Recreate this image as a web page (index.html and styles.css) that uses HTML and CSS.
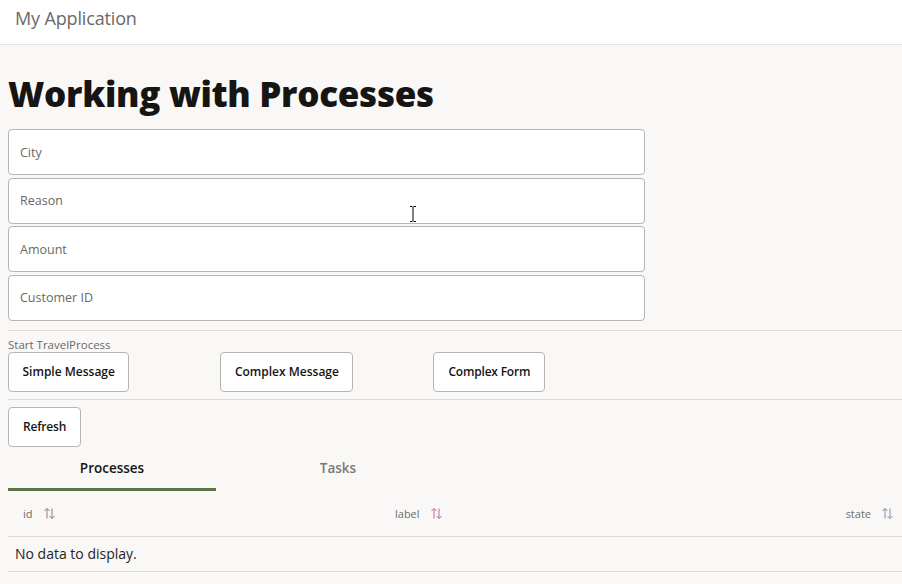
FILE: index.html
```html
<!DOCTYPE html>
<html>
<head>
<meta charset="utf-8">
<link rel="stylesheet" href="styles.css">
</head>
<body>
<header class="topbar"><span class="app-title">My Application</span></header>
<main class="content">
  <h1 class="page-title">Working with Processes</h1>
  <div class="fields">
    <div class="field"><span class="ph">City</span></div>
    <div class="field"><span class="ph">Reason</span></div>
    <div class="field"><span class="ph">Amount</span></div>
    <div class="field"><span class="ph">Customer ID</span></div>
  </div>
  <hr class="sep sep-first">
  <div class="group-label">Start TravelProcess</div>
  <div class="btn-row">
    <button class="btn btn-simple">Simple Message</button>
    <button class="btn btn-complex">Complex Message</button>
    <button class="btn btn-form">Complex Form</button>
  </div>
  <hr class="sep sep-second">
  <div class="btn-row refresh-row">
    <button class="btn btn-refresh">Refresh</button>
  </div>
  <div class="tabs">
    <div class="tab tab-active">Processes</div>
    <div class="tab tab-second">Tasks</div>
  </div>
  <div class="table">
    <div class="thead">
      <div class="th th-id">id <svg class="sort" viewBox="0 0 11 12"><path d="M3 11V1M0.5 3.5L3 1l2.5 2.5M8 1v10M5.5 8.5L8 11l2.5-2.5" fill="none" stroke="currentColor" stroke-width="1"/></svg></div>
      <div class="th th-label">label <svg class="sort" viewBox="0 0 11 12"><path d="M3 11V1M0.5 3.5L3 1l2.5 2.5M8 1v10M5.5 8.5L8 11l2.5-2.5" fill="none" stroke="currentColor" stroke-width="1"/></svg></div>
      <div class="th th-state">state <svg class="sort" viewBox="0 0 11 12"><path d="M3 11V1M0.5 3.5L3 1l2.5 2.5M8 1v10M5.5 8.5L8 11l2.5-2.5" fill="none" stroke="currentColor" stroke-width="1"/></svg></div>
    </div>
    <div class="empty">No data to display.</div>
  </div>
  <svg class="cursor" viewBox="0 0 8 16"><path d="M1 0.5h2.5M4.5 0.5H7M4 1v14M1 15.5h2.5M4.5 15.5H7" fill="none" stroke="#000" stroke-width="1"/></svg>
</main>
</body>
</html>
```
FILE: styles.css
```css
html, body {
  margin: 0;
  padding: 0;
}
body {
  background: #f9f8f6;
  font-family: "Open Sans", "Noto Sans", sans-serif;
  color: #161513;
  width: 902px;
  height: 584px;
  overflow: hidden;
}
.topbar {
  height: 44px;
  box-sizing: content-box;
  background: #fff;
  border-bottom: 1px solid #e4e3e1;
  padding-left: 15px;
}
.app-title {
  display: block;
  padding-top: 5px;
  font-size: 18px;
  line-height: 26px;
  color: #6b6967;
  letter-spacing: -0.15px;
}
.content {
  position: relative;
  padding: 0 0 0 8px;
}
.page-title {
  margin: 0;
  padding-top: 28px;
  height: 56px;
  font-size: 35px;
  font-weight: 800;
  line-height: 42px;
  letter-spacing: -0.3px;
  color: #161513;
}
.fields {
  display: flex;
  flex-direction: column;
  gap: 2.4px;
  width: 637px;
}
.field {
  box-sizing: border-box;
  height: 46.2px;
  background: #fff;
  border: 1px solid #b7b5b2;
  border-radius: 4px;
  display: flex;
  align-items: center;
  padding-left: 11px;
}
.ph {
  font-size: 12.5px;
  color: #6a6866;
}
.sep {
  border: 0;
  border-top: 1px solid #dedcd9;
  margin: 9px 0 0 0;
  height: 0;
}
.sep-second {
  margin-top: 7px;
}
.group-label {
  font-size: 11.5px;
  color: #6b6967;
  line-height: 14px;
  margin-top: 7px;
}
.btn-row {
  display: flex;
}
.refresh-row {
  margin-top: 7px;
}
.btn {
  height: 40px;
  box-sizing: border-box;
  background: #fff;
  border: 1px solid #b7b5b2;
  border-radius: 4px;
  font-family: inherit;
  font-size: 12px;
  font-weight: 600;
  color: #161513;
  padding: 0 14px;
}
.btn-simple { margin-right: 91px; padding: 0 13.5px; }
.btn-complex { margin-right: 80px; padding: 0 13.5px; }
.btn-form { padding: 0 14px; letter-spacing: -0.2px; }
.btn-refresh { padding: 0 14px; letter-spacing: -0.2px; }
.tabs {
  display: flex;
  height: 44px;
}
.tab {
  box-sizing: border-box;
  width: 208px;
  text-align: center;
  font-size: 13.5px;
  font-weight: 600;
  color: #7a7876;
  padding-top: 12px;
}
.tab-active {
  color: #161513;
  border-bottom: 3px solid #5b7346;
}
.tab-second {
  width: 244px;
}
.thead {
  display: flex;
  height: 45px;
  border-bottom: 1px solid #dcdad7;
  align-items: center;
}
.th {
  font-size: 11px;
  color: #6f6d6a;
  display: flex;
  align-items: center;
  gap: 11px;
}
.th-id { width: 372px; padding-left: 15px; box-sizing: border-box; }
.th-label { flex: 1; padding-left: 15px; }
.th-state { padding-right: 9px; }
.sort {
  width: 11px;
  height: 13px;
}
.th-id .sort { color: #a0786a; }
.th-label .sort { color: #b06aa0; }
.th-state .sort { color: #7d8fa8; }
.empty {
  height: 34px;
  border-bottom: 1px solid #dcdad7;
  display: flex;
  align-items: center;
  padding-left: 7px;
  font-size: 14px;
  color: #262422;
}
.cursor {
  position: absolute;
  left: 409px;
  top: 161px;
  width: 8px;
  height: 16px;
}
```
